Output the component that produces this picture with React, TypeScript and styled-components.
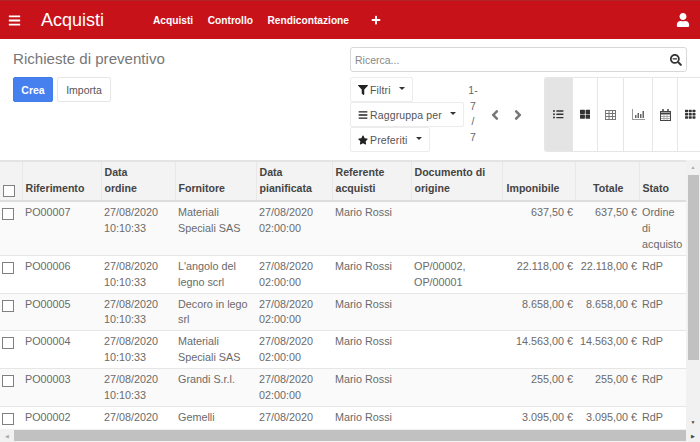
import styled, { createGlobalStyle } from 'styled-components';
import {
  FaAngleLeft,
  FaAngleRight,
  FaBars,
  FaFilter,
  FaListUl,
  FaPlus,
  FaSearchMinus,
  FaStar,
  FaTh,
  FaThLarge,
  FaUser,
} from 'react-icons/fa';

const rows = [
  { ref: 'PO00007', vendor: 'Materiali Speciali SAS', doc: '', net: '637,50 €', total: '637,50 €', state: 'Ordine di acquisto', times: true },
  { ref: 'PO00006', vendor: "L'angolo del legno scrl", doc: 'OP/00002, OP/00001', net: '22.118,00 €', total: '22.118,00 €', state: 'RdP', times: true },
  { ref: 'PO00005', vendor: 'Decoro in lego srl', doc: '', net: '8.658,00 €', total: '8.658,00 €', state: 'RdP', times: true },
  { ref: 'PO00004', vendor: 'Materiali Speciali SAS', doc: '', net: '14.563,00 €', total: '14.563,00 €', state: 'RdP', times: true },
  { ref: 'PO00003', vendor: 'Grandi S.r.l.', doc: '', net: '255,00 €', total: '255,00 €', state: 'RdP', times: true },
  { ref: 'PO00002', vendor: 'Gemelli', doc: '', net: '3.095,00 €', total: '3.095,00 €', state: 'RdP', times: false },
];

const columns = [22, 79, 74, 81, 76, 79, 91, 73, 64, 47];

const TableIcon = () => (
  <svg width="11" height="10" viewBox="0 0 11 10" fill="none" stroke="#777" strokeWidth="1">
    <rect x="0.5" y="0.5" width="10" height="9" />
    <path d="M0 3.5h11M0 6.5h11M4 0v10M7.5 0v10" />
  </svg>
);

const ChartIcon = () => (
  <svg width="13" height="11" viewBox="0 0 13 11" fill="#666">
    <path d="M0 0h1v10h12v1H0z" fill="#999" />
    <rect x="3" y="6" width="1.5" height="3" />
    <rect x="5.5" y="4" width="1.5" height="5" />
    <rect x="8" y="5" width="1.5" height="4" />
    <rect x="10.5" y="2" width="1.5" height="7" />
  </svg>
);

const CalendarIcon = () => (
  <svg width="11" height="12" viewBox="0 0 11 12" fill="none" stroke="#444" strokeWidth="1">
    <rect x="0.5" y="2.5" width="10" height="9" />
    <path d="M0 4.5h11" strokeWidth="2" />
    <path d="M3 0v3M8 0v3" strokeWidth="1.5" />
    <path d="M1 7.5h9M1 9.5h9M4 5v6M7 5v6" stroke="#aaa" />
  </svg>
);

const views = [
  { icon: <FaListUl />, active: true, width: 28 },
  { icon: <FaThLarge />, active: false, width: 25 },
  { icon: <TableIcon />, active: false, width: 26 },
  { icon: <ChartIcon />, active: false, width: 29 },
  { icon: <CalendarIcon />, active: false, width: 25 },
  { icon: <FaTh />, active: false, width: 26 },
];

export default function App() {
  return (
    <Page>
      <GlobalStyle />
      <Navbar>
        <BarsButton>
          <FaBars />
        </BarsButton>
        <Brand>Acquisti</Brand>
        <NavMenu>
          <NavLink>Acquisti</NavLink>
          <NavLink>Controllo</NavLink>
          <NavLink>Rendicontazione</NavLink>
          <PlusLink>
            <FaPlus />
          </PlusLink>
        </NavMenu>
        <UserLink>
          <FaUser />
        </UserLink>
      </Navbar>

      <ControlPanel>
        <LeftControls>
          <Title>Richieste di preventivo</Title>
          <Buttons>
            <PrimaryButton>Crea</PrimaryButton>
            <SecondaryButton>Importa</SecondaryButton>
          </Buttons>
        </LeftControls>
        <RightControls>
          <SearchBox>
            <SearchPlaceholder>Ricerca...</SearchPlaceholder>
            <FaSearchMinus />
          </SearchBox>
          <SearchOptions>
            <FilterStack>
              <FilterButton>
                <FaFilter />
                Filtri
                <Caret />
              </FilterButton>
              <FilterButton>
                <FaBars />
                Raggruppa per
                <Caret />
              </FilterButton>
              <FilterButton>
                <FaStar />
                Preferiti
                <Caret />
              </FilterButton>
            </FilterStack>
            <Pager>
              <span>1-</span>
              <span>7</span>
              <span>/</span>
              <span>7</span>
            </Pager>
            <PagerArrows>
              <FaAngleLeft />
              <FaAngleRight />
            </PagerArrows>
            <ViewSwitcher>
              {views.map((view, index) => (
                <ViewButton key={index} $active={view.active} $width={view.width}>
                  {view.icon}
                </ViewButton>
              ))}
            </ViewSwitcher>
          </SearchOptions>
        </RightControls>
      </ControlPanel>

      <TableArea>
        <TableRow>
          <TableScroll>
            <Table>
              <colgroup>
                {columns.map((width, index) => (
                  <col key={index} width={width} />
                ))}
              </colgroup>
              <thead>
                <tr>
                  <HeadCell $check>
                    <Checkbox />
                  </HeadCell>
                  <HeadCell>Riferimento</HeadCell>
                  <HeadCell>
                    Data
                    <br />
                    ordine
                  </HeadCell>
                  <HeadCell>Fornitore</HeadCell>
                  <HeadCell>
                    Data
                    <br />
                    pianificata
                  </HeadCell>
                  <HeadCell>
                    Referente
                    <br />
                    acquisti
                  </HeadCell>
                  <HeadCell>
                    Documento di
                    <br />
                    origine
                  </HeadCell>
                  <HeadCell $right>Imponibile</HeadCell>
                  <HeadCell $right>Totale</HeadCell>
                  <HeadCell>Stato</HeadCell>
                </tr>
              </thead>
              <tbody>
                {rows.map((row, index) => (
                  <BodyRow key={row.ref} $odd={index % 2 === 0}>
                    <Cell $check>
                      <Checkbox />
                    </Cell>
                    <Cell>{row.ref}</Cell>
                    <Cell>
                      27/08/2020
                      {row.times && (
                        <>
                          <br />
                          10:10:33
                        </>
                      )}
                    </Cell>
                    <Cell>{row.vendor}</Cell>
                    <Cell>
                      27/08/2020
                      {row.times && (
                        <>
                          <br />
                          02:00:00
                        </>
                      )}
                    </Cell>
                    <Cell>Mario Rossi</Cell>
                    <Cell>{row.doc}</Cell>
                    <Cell $right>{row.net}</Cell>
                    <Cell $right>{row.total}</Cell>
                    <Cell>{row.state}</Cell>
                  </BodyRow>
                ))}
              </tbody>
            </Table>
          </TableScroll>
          <VerticalBar>
            <Arrow>▲</Arrow>
            <VerticalThumb />
            <VerticalSpacer />
            <Arrow $dark>▼</Arrow>
          </VerticalBar>
        </TableRow>
        <HorizontalBar>
          <Arrow>◀</Arrow>
          <HorizontalThumb />
          <Arrow $dark>▶</Arrow>
        </HorizontalBar>
      </TableArea>
    </Page>
  );
}

const GlobalStyle = createGlobalStyle`
  html, body {
    margin: 0;
    padding: 0;
    background: #fff;
  }
  body {
    font-family: 'Liberation Sans', Arial, sans-serif;
    font-size: 10.5px;
    color: #666;
  }
`;

const Page = styled.div`
  width: 700px;
  height: 442px;
  overflow: hidden;
  display: flex;
  flex-direction: column;
`;

const Navbar = styled.header`
  height: 39px;
  flex: none;
  box-sizing: border-box;
  border-top: 1px solid #b0252a;
  background: #c8121a;
  color: #fff;
  display: flex;
  align-items: center;
`;

const BarsButton = styled.div`
  width: 41px;
  padding-left: 8px;
  box-sizing: border-box;
  display: flex;
  font-size: 13px;
`;

const Brand = styled.div`
  width: 112px;
  font-size: 18px;
  line-height: 20px;
`;

const NavMenu = styled.nav`
  display: flex;
  align-items: center;
  gap: 14.5px;
  flex: 1;
  font-size: 10.2px;
  font-weight: bold;
`;

const NavLink = styled.span`
  display: block;
`;

const PlusLink = styled.span`
  display: flex;
  font-size: 10px;
  margin-left: 7px;
`;

const UserLink = styled.div`
  display: flex;
  font-size: 14px;
  padding-right: 10px;
`;

const ControlPanel = styled.section`
  height: 121px;
  flex: none;
  box-sizing: border-box;
  display: flex;
  justify-content: space-between;
  padding: 8px 0 0 13px;
`;

const LeftControls = styled.div`
  display: flex;
  flex-direction: column;
`;

const Title = styled.h1`
  margin: 2px 0 9px;
  font-size: 15.1px;
  line-height: 19px;
  font-weight: normal;
  color: #777;
`;

const Buttons = styled.div`
  display: flex;
  gap: 4px;
`;

const PrimaryButton = styled.button`
  width: 40px;
  height: 25px;
  padding: 0;
  border: 1px solid #3f7de8;
  border-radius: 2px;
  background: #4680ef;
  color: #fff;
  font: bold 10.5px 'Liberation Sans', Arial, sans-serif;
`;

const SecondaryButton = styled.button`
  width: 54px;
  height: 25px;
  padding: 0;
  border: 1px solid #e6e6e6;
  border-radius: 2px;
  background: #fff;
  color: #555;
  font: 10.5px 'Liberation Sans', Arial, sans-serif;
`;

const RightControls = styled.div`
  width: 350px;
  display: flex;
  flex-direction: column;
  gap: 5px;
`;

const SearchBox = styled.div`
  width: 337px;
  height: 25px;
  box-sizing: border-box;
  padding: 0 4px;
  border: 1px solid #d8d8d8;
  border-radius: 3px;
  display: flex;
  align-items: center;
  justify-content: space-between;
  color: #333;
  font-size: 12px;
`;

const SearchPlaceholder = styled.span`
  font-size: 10.5px;
  color: #888;
`;

const SearchOptions = styled.div`
  display: flex;
  align-items: flex-start;
`;

const FilterStack = styled.div`
  width: 116px;
  flex: none;
  display: flex;
  flex-direction: column;
  align-items: flex-start;
`;

const FilterButton = styled.div`
  height: 25px;
  box-sizing: border-box;
  padding: 0 7px;
  border: 1px solid #ececec;
  border-radius: 2px;
  display: flex;
  align-items: center;
  gap: 2px;
  color: #555;
  font-size: 10.5px;
  letter-spacing: 0.15px;
  white-space: nowrap;

  svg {
    color: #222;
    font-size: 10px;
  }
`;

const Caret = styled.span`
  margin-left: 6px;
  margin-bottom: 3px;
  border-top: 3.5px solid #333;
  border-left: 3.5px solid transparent;
  border-right: 3.5px solid transparent;
`;

const Pager = styled.div`
  width: 14px;
  flex: none;
  padding-top: 6px;
  display: flex;
  flex-direction: column;
  align-items: center;
  line-height: 15.7px;
  font-size: 10.5px;
  color: #666;
`;

const PagerArrows = styled.div`
  width: 64px;
  height: 75px;
  flex: none;
  padding: 0 18px 0 7px;
  box-sizing: border-box;
  display: flex;
  align-items: center;
  justify-content: space-between;
  color: #777;
  font-size: 16px;
`;

const ViewSwitcher = styled.div`
  display: flex;
  flex: none;
  height: 75px;
  border-radius: 3px 0 0 3px;
  border: 1px solid #e6e6e6;
  border-right: none;
  box-sizing: border-box;
  overflow: hidden;
`;

const ViewButton = styled.div<{ $active: boolean; $width: number }>`
  width: ${({ $width }) => $width}px;
  box-sizing: border-box;
  border-right: 1px solid #e6e6e6;
  background: ${({ $active }) => ($active ? '#e4e4e4' : '#fff')};
  display: flex;
  align-items: center;
  justify-content: center;
  color: #333;
  font-size: 10.5px;
`;

const TableArea = styled.section`
  flex: 1;
  min-height: 0;
  display: flex;
  flex-direction: column;
`;

const TableRow = styled.div`
  flex: 1;
  min-height: 0;
  display: flex;
`;

const TableScroll = styled.div`
  width: 686px;
  overflow: hidden;
`;

const Table = styled.table`
  width: 686px;
  table-layout: fixed;
  border-collapse: collapse;
  font-size: 10.8px;
  line-height: 15.9px;
`;

const HeadCell = styled.th<{ $check?: boolean; $right?: boolean }>`
  height: 40px;
  box-sizing: border-box;
  padding: ${({ $check, $right }) =>
    $check ? '0 0 3px 3px' : $right ? '2px 15px 3px 3px' : '2px 3px 3px 3px'};
  vertical-align: bottom;
  text-align: ${({ $right }) => ($right ? 'right' : 'left')};
  background: #f3f3f3;
  border-top: 2px solid #e4e4e4;
  border-bottom: 2px solid #ddd;
  border-left: 1px solid #e8e8e8;
  color: #444;
  font-size: 10.6px;
  font-weight: bold;

  &:first-child {
    border-left: none;
  }
`;

const BodyRow = styled.tr<{ $odd: boolean }>`
  background: ${({ $odd }) => ($odd ? '#fafafa' : '#fff')};
  border-bottom: 1px solid #e6e6e6;

  &:last-child {
    border-bottom: none;
  }
`;

const Cell = styled.td<{ $check?: boolean; $right?: boolean }>`
  padding: ${({ $check }) => ($check ? '6px 0 0 2px' : '3px 2px 2px 3px')};
  vertical-align: top;
  text-align: ${({ $right }) => ($right ? 'right' : 'left')};
  color: #6a6a6a;
`;

const Checkbox = styled.span`
  display: block;
  width: 12px;
  height: 12px;
  box-sizing: border-box;
  border: 1px solid #808080;
  background: #fff;
`;

const VerticalBar = styled.div`
  width: 14px;
  background: #f1f1f1;
  display: flex;
  flex-direction: column;
  align-items: center;
`;

const VerticalThumb = styled.div`
  width: 11px;
  height: 185px;
  flex: none;
  margin-top: 1px;
  background: #c1c1c1;
`;

const VerticalSpacer = styled.div`
  flex: 1;
`;

const HorizontalBar = styled.div`
  height: 13px;
  flex: none;
  background: #f1f1f1;
  display: flex;
  align-items: center;
  justify-content: space-between;
`;

const HorizontalThumb = styled.div`
  flex: 1;
  height: 11px;
  background: #c1c1c1;
`;

const Arrow = styled.span<{ $dark?: boolean }>`
  width: 14px;
  height: 14px;
  flex: none;
  display: flex;
  align-items: center;
  justify-content: center;
  font-size: 5px;
  color: ${({ $dark }) => ($dark ? '#444' : '#aaa')};
`;
